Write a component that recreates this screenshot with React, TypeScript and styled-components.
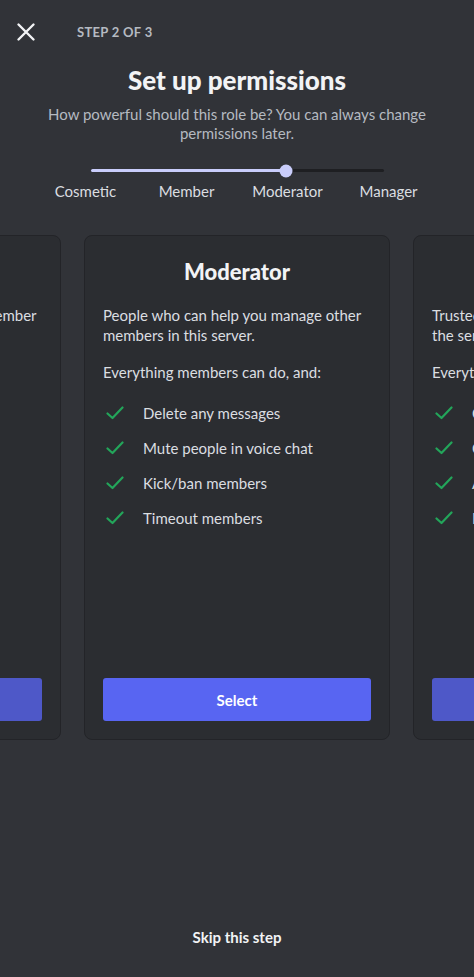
import React from 'react';
import styled, { createGlobalStyle } from 'styled-components';

const GlobalStyle = createGlobalStyle`
  html, body {
    margin: 0;
    padding: 0;
    background: #313338;
  }
  body {
    font-family: Lato, "Noto Sans", sans-serif;
    -webkit-font-smoothing: antialiased;
  }
`;

const Screen = styled.div`
  width: 474px;
  height: 977px;
  background: #313338;
  color: #dbdee1;
  display: flex;
  flex-direction: column;
  overflow: hidden;
`;

const Header = styled.div`
  height: 64px;
  display: flex;
  align-items: center;
  padding: 0 16px;
  gap: 41px;
`;

const CloseButton = styled.button`
  background: none;
  border: none;
  padding: 0;
  width: 20px;
  height: 20px;
  display: flex;
  cursor: pointer;
`;

const StepLabel = styled.div`
  font-size: 13px;
  font-weight: 700;
  letter-spacing: 0.3px;
  color: #b5bac1;
`;

const Title = styled.h1`
  margin: 0;
  margin-top: 1px;
  text-align: center;
  font-size: 26px;
  line-height: 30px;
  font-weight: 900;
  color: #f2f3f5;
`;

const Subtitle = styled.p`
  margin: 10px auto 0;
  width: 400px;
  text-align: center;
  font-size: 15px;
  line-height: 19px;
  color: #b5bac1;
`;

const Track = styled.div`
  position: relative;
  width: 293px;
  height: 3px;
  margin: 26px auto 0;
  background: #1e1f22;
  border-radius: 2px;
`;

const TrackFill = styled.div`
  height: 100%;
  background: #c9cdfb;
  border-radius: 2px;
`;

const Thumb = styled.div`
  position: absolute;
  top: 50%;
  width: 13px;
  height: 13px;
  border-radius: 50%;
  background: #c9cdfb;
  transform: translate(-50%, -50%);
`;

const Labels = styled.div`
  display: grid;
  grid-template-columns: repeat(4, 101px);
  justify-content: center;
  margin-top: 9px;
`;

const Label = styled.div`
  text-align: center;
  font-size: 15px;
  line-height: 20px;
  color: #dbdee1;
`;

const Carousel = styled.div`
  display: flex;
  justify-content: center;
  gap: 23px;
  margin-top: 34px;
`;

const Card = styled.div`
  flex: 0 0 306px;
  height: 505px;
  box-sizing: border-box;
  background: #2b2d31;
  border: 1px solid #232428;
  border-radius: 8px;
  padding: 22px 18px 18px;
  display: flex;
  flex-direction: column;
`;

const CardTitle = styled.h2`
  margin: 0;
  text-align: center;
  font-size: 22px;
  line-height: 28px;
  font-weight: 900;
  color: #f2f3f5;
`;

const CardText = styled.p<{ $gap?: number }>`
  margin: ${p => p.$gap ?? 0}px 0 0;
  font-size: 15px;
  line-height: 20px;
  color: #dbdee1;
`;

const Perks = styled.ul`
  list-style: none;
  margin: 21px 0 0;
  padding: 0;
  display: flex;
  flex-direction: column;
  gap: 15px;
`;

const Perk = styled.li`
  display: flex;
  align-items: center;
  gap: 19px;
  padding-left: 3px;
  font-size: 15px;
  line-height: 20px;
  color: #dbdee1;
  white-space: nowrap;
`;

const SelectButton = styled.button<{ $dim?: boolean }>`
  margin-top: auto;
  height: 43px;
  border: none;
  border-radius: 3px;
  background: ${p => (p.$dim ? '#4e58c8' : '#5865f2')};
  color: #ffffff;
  font-family: inherit;
  font-size: 15px;
  font-weight: 700;
  cursor: pointer;
`;

const Footer = styled.div`
  margin-top: auto;
  padding-bottom: 30px;
  text-align: center;
`;

const SkipLink = styled.button`
  background: none;
  border: none;
  color: #f2f3f5;
  font-family: inherit;
  font-size: 15px;
  font-weight: 700;
  cursor: pointer;
`;

const Check = () => (
  <svg width="18" height="14" viewBox="0 0 18 14" fill="none">
    <path d="M1.5 7.5 L6.5 12 L16.5 1.5" stroke="#23a55a" strokeWidth="2.2" strokeLinecap="round" strokeLinejoin="round" />
  </svg>
);

const CloseIcon = () => (
  <svg width="20" height="20" viewBox="0 0 20 20">
    <path d="M2.5 2.5 L17.5 17.5 M17.5 2.5 L2.5 17.5" stroke="#f2f3f5" strokeWidth="2.4" strokeLinecap="round" />
  </svg>
);

type Role = {
  name: string;
  blurb: string;
  lead: string;
  perks: string[];
};

const roles: Role[] = [
  {
    name: 'Member',
    blurb: 'Regular folks who can chat as a member of this server.',
    lead: 'They can:',
    perks: ['Send messages', 'Join voice', 'React', 'Invite'],
  },
  {
    name: 'Moderator',
    blurb: 'People who can help you manage other members in this server.',
    lead: 'Everything members can do, and:',
    perks: ['Delete any messages', 'Mute people in voice chat', 'Kick/ban members', 'Timeout members'],
  },
  {
    name: 'Manager',
    blurb: 'Trusted people who can help you with the server.',
    lead: 'Everything moderators can do, and:',
    perks: ['Create channels', 'Change server name', 'Add emoji', 'Manage roles'],
  },
];

const stops = ['Cosmetic', 'Member', 'Moderator', 'Manager'];

export default function App() {
  const level = 2;
  const fill = (level / (stops.length - 1)) * 100;

  return (
    <Screen>
      <GlobalStyle />
      <Header>
        <CloseButton aria-label="Close">
          <CloseIcon />
        </CloseButton>
        <StepLabel>STEP 2 OF 3</StepLabel>
      </Header>

      <Title>Set up permissions</Title>
      <Subtitle>How powerful should this role be? You can always change permissions later.</Subtitle>

      <Track>
        <TrackFill style={{ width: `${fill}%` }} />
        <Thumb style={{ left: `${fill}%` }} />
      </Track>
      <Labels>
        {stops.map(s => (
          <Label key={s}>{s}</Label>
        ))}
      </Labels>

      <Carousel>
        {roles.map((r, i) => (
          <Card key={r.name}>
            <CardTitle>{r.name}</CardTitle>
            <CardText $gap={19}>{r.blurb}</CardText>
            <CardText $gap={17}>{r.lead}</CardText>
            <Perks>
              {r.perks.map(p => (
                <Perk key={p}>
                  <Check />
                  {p}
                </Perk>
              ))}
            </Perks>
            <SelectButton $dim={i !== 1}>Select</SelectButton>
          </Card>
        ))}
      </Carousel>

      <Footer>
        <SkipLink>Skip this step</SkipLink>
      </Footer>
    </Screen>
  );
}
